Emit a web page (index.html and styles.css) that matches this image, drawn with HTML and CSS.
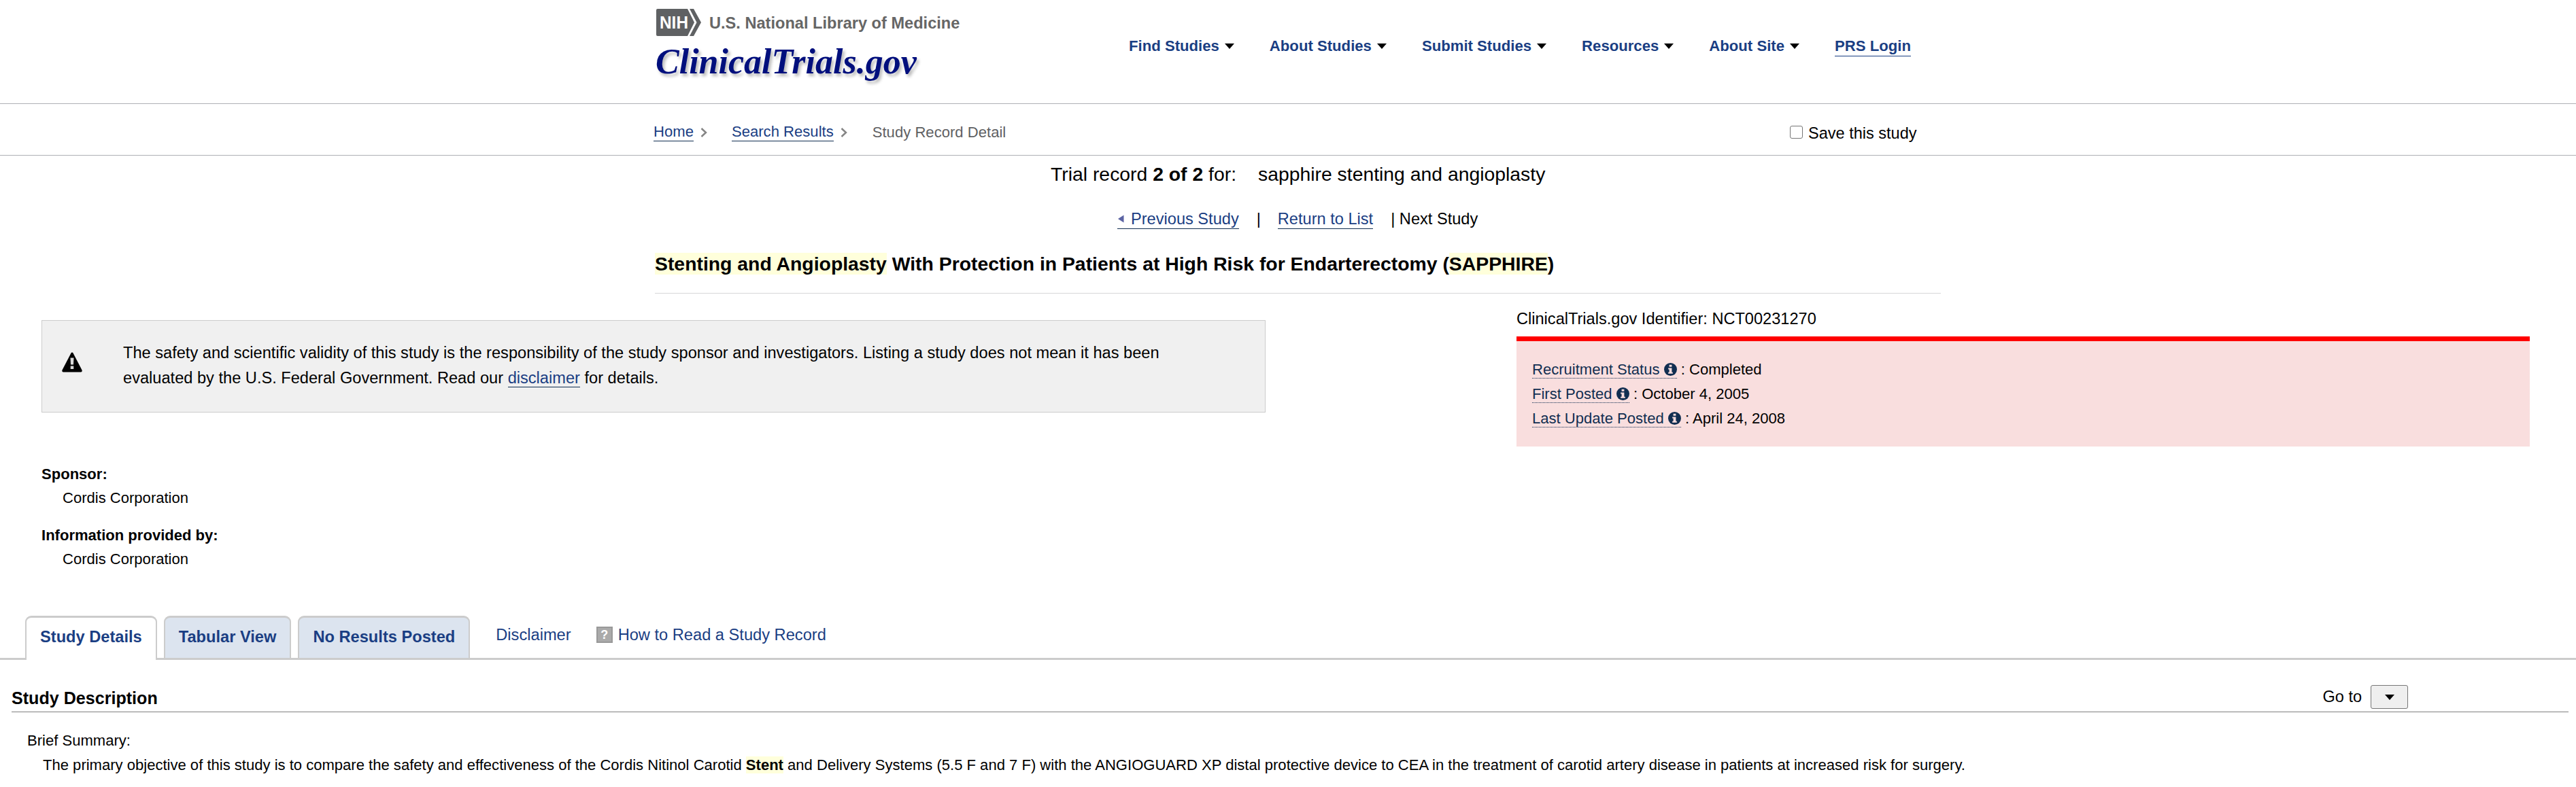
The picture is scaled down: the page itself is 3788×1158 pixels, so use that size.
FILE: index.html
```html
<!DOCTYPE html>
<html lang="en">
<head>
    <meta charset="UTF-8">
    <meta name="viewport" content="width=device-width, initial-scale=1.0">
    <title>Stenting and Angioplasty With Protection in Patients at High Risk for Endarterectomy (SAPPHIRE) - ClinicalTrials.gov</title>
    <link rel="stylesheet" href="styles.css">
</head>
<body>
    <header class="header">
        <div class="branding">
            <div class="nlm">
                <svg class="nih-logo" width="66" height="40" viewBox="0 0 66 40">
                    <path d="M2 0H46L56 20L46 40H2Q0 40 0 38V2Q0 0 2 0Z" fill="#5f6163"/>
                    <path d="M49 0H55L66 20L55 40H49L59.5 20Z" fill="#5f6163"/>
                    <text x="5" y="29" class="nih-text" textLength="42" lengthAdjust="spacingAndGlyphs">NIH</text>
                </svg>
                <span class="nlm-name">U.S. National Library of Medicine</span>
            </div>
            <div class="site-name">ClinicalTrials.gov</div>
        </div>
        <nav class="main-nav">
            <a href="#">Find Studies<span class="arrow"></span></a>
            <a href="#">About Studies<span class="arrow"></span></a>
            <a href="#">Submit Studies<span class="arrow"></span></a>
            <a href="#">Resources<span class="arrow"></span></a>
            <a href="#">About Site<span class="arrow"></span></a>
            <a href="#" class="login">PRS Login</a>
        </nav>
    </header>

    <div class="breadcrumb-bar">
        <div class="breadcrumbs">
            <a href="#" class="link">Home</a>
            <svg class="chevron" width="10" height="14" viewBox="0 0 10 14"><path d="M1.5 1L8 7L1.5 13" fill="none" stroke="#858585" stroke-width="2.5"/></svg>
            <a href="#" class="link">Search Results</a>
            <svg class="chevron" width="10" height="14" viewBox="0 0 10 14"><path d="M1.5 1L8 7L1.5 13" fill="none" stroke="#858585" stroke-width="2.5"/></svg>
            <span class="current">Study Record Detail</span>
        </div>
        <label class="save"><input type="checkbox">Save this study</label>
    </div>

    <div class="record-count">
        <span>Trial record <b>2 of 2</b> for:</span>
        <span>sapphire stenting and angioplasty</span>
    </div>
    <div class="record-nav">
        <a href="#" class="link prev"><svg width="11" height="12" viewBox="0 0 11 12"><path d="M1 6L9.5 0.5V11.5Z" fill="#5b63a3"/></svg>Previous Study</a>
        <span class="sep">|</span>
        <a href="#" class="link">Return to List</a>
        <span class="next">| Next Study</span>
    </div>

    <h1><mark>Stenting and Angioplasty</mark> With Protection in Patients at High Risk for Endarterectomy (<mark>SAPPHIRE</mark>)</h1>

    <div class="overview">
        <div class="left">
            <div class="notice">
                <svg class="warning" width="30" height="30" viewBox="0 0 30 30">
                    <path d="M13.5 1.5Q15 -0.5 16.5 1.5L29.5 26.5Q30.3 29.5 28 29.5H2Q-0.3 29.5 0.5 26.5Z" fill="#000"/>
                    <path d="M12.5 8.5H17.5L17 18.5H13ZM12.7 20.5H17.3V25H12.7Z" fill="#d8d8d8"/>
                </svg>
                <p>The safety and scientific validity of this study is the responsibility of the study sponsor and investigators. Listing a study does not mean it has been<br>evaluated by the U.S. Federal Government. Read our <a href="#" class="link">disclaimer</a> for details.</p>
            </div>
            <dl class="sponsor">
                <dt>Sponsor:</dt>
                <dd>Cordis Corporation</dd>
                <dt>Information provided by:</dt>
                <dd>Cordis Corporation</dd>
            </dl>
        </div>
        <div class="right">
            <div class="identifier">ClinicalTrials.gov Identifier: NCT00231270</div>
            <div class="status">
                <div><span class="term">Recruitment Status <svg class="info" viewBox="0 0 20 20"><circle cx="10" cy="10" r="10" fill="#112e51"/><path d="M8 3H12V6H8ZM6.5 8H12V14.5H13.5V16.5H6.5V14.5H8V10H6.5Z" fill="#f9dede"/></svg></span> : Completed</div>
                <div><span class="term">First Posted <svg class="info" viewBox="0 0 20 20"><circle cx="10" cy="10" r="10" fill="#112e51"/><path d="M8 3H12V6H8ZM6.5 8H12V14.5H13.5V16.5H6.5V14.5H8V10H6.5Z" fill="#f9dede"/></svg></span> : October 4, 2005</div>
                <div><span class="term">Last Update Posted <svg class="info" viewBox="0 0 20 20"><circle cx="10" cy="10" r="10" fill="#112e51"/><path d="M8 3H12V6H8ZM6.5 8H12V14.5H13.5V16.5H6.5V14.5H8V10H6.5Z" fill="#f9dede"/></svg></span> : April 24, 2008</div>
            </div>
        </div>
    </div>

    <div class="tabs">
        <a href="#" class="tab active">Study Details</a>
        <a href="#" class="tab">Tabular View</a>
        <a href="#" class="tab">No Results Posted</a>
        <a href="#" class="tab-link">Disclaimer</a>
        <a href="#" class="tab-link help"><span class="help-icon">?</span>How to Read a Study Record</a>
    </div>

    <section class="description">
        <div class="section-head">
            <h2>Study Description</h2>
            <div class="goto">Go to <button type="button"><span class="arrow"></span></button></div>
        </div>
        <div class="summary-label">Brief Summary:</div>
        <p class="summary">The primary objective of this study is to compare the safety and effectiveness of the Cordis Nitinol Carotid <mark>Stent</mark> and Delivery Systems (5.5 F and 7 F) with the ANGIOGUARD XP distal protective device to CEA in the treatment of carotid artery disease in patients at increased risk for surgery.</p>
    </section>
</body>
</html>
```
FILE: styles.css
```css
* {
    box-sizing: border-box;
}

body {
    margin: 0;
    font-family: Arial, "Liberation Sans", sans-serif;
    font-size: 22.05px;
    line-height: 36px;
    color: #000;
    background-color: #fff;
}

a {
    color: #1a3e83;
    text-decoration: none;
}

.link {
    border-bottom: 1px solid #112e51;
}

mark {
    background-color: #ffffdb;
    color: #000;
    font-weight: bold;
}

/* Header */
.header {
    display: flex;
    height: 153px;
    padding-left: 965px;
    border-bottom: 1px solid #aeb0b5;
}

.branding {
    width: 695px;
    padding-top: 13px;
}

.nlm {
    display: flex;
    align-items: center;
    gap: 12px;
    height: 40px;
}

.nih-text {
    font-family: Arial, "Liberation Sans", sans-serif;
    font-size: 25px;
    font-weight: bold;
    fill: #fff;
}

.nlm-name {
    padding-top: 1px;
    font-size: 23.6px;
    font-weight: bold;
    color: #666;
}

.site-name {
    margin: 8px 0 0 -1px;
    font-family: "Liberation Serif", "Times New Roman", serif;
    font-size: 52px;
    line-height: 60px;
    font-weight: bold;
    font-style: italic;
    color: #000f7d;
    text-shadow: 3px 4px 4px #bbb;
}

.main-nav {
    display: flex;
    align-items: flex-start;
    gap: 52px;
    padding-top: 53px;
}

.main-nav a {
    font-size: 22.15px;
    font-weight: bold;
    line-height: 29px;
    white-space: nowrap;
}

.main-nav .login {
    border-bottom: 1px solid #1a3e83;
}

.arrow {
    display: inline-block;
    margin-left: 8px;
    border-left: 7.5px solid transparent;
    border-right: 7.5px solid transparent;
    border-top: 8px solid #000;
    vertical-align: 3px;
}

/* Breadcrumbs */
.breadcrumb-bar {
    display: flex;
    align-items: flex-start;
    height: 76px;
    padding-left: 961px;
    border-bottom: 1px solid #aeb0b5;
}

.breadcrumbs {
    display: flex;
    align-items: center;
    width: 1671px;
    padding-top: 28px;
    font-size: 22.1px;
}

.breadcrumbs .link {
    line-height: 26px;
}

.chevron {
    margin: 0 36px 0 10px;
}

.current {
    margin-left: 1px;
    color: #5f6163;
    line-height: 27px;
}

.save {
    display: flex;
    align-items: center;
    padding-top: 25px;
    font-size: 23.52px;
}

.save input {
    appearance: none;
    width: 19px;
    height: 19px;
    margin: 0 8px 4px 0;
    border: 1.5px solid #767676;
    border-radius: 3px;
    background-color: #fff;
}

/* Record navigation */
.record-count {
    display: flex;
    gap: 32px;
    padding: 9px 0 0 1545px;
    font-size: 28.35px;
}

.record-nav {
    display: flex;
    align-items: flex-start;
    margin-top: 34px;
    padding-left: 1643px;
    font-size: 23.6px;
    line-height: 28px;
}

.prev svg {
    margin-right: 9px;
    vertical-align: 2px;
}

.sep {
    margin: 0 25px 0 26px;
}

.next {
    margin-left: 26px;
}

h1 {
    margin: 33px 934px 0 963px;
    height: 62px;
    border-bottom: 1px solid #d6d7d9;
    font-size: 28.37px;
    line-height: 36px;
}

/* Overview */
.overview {
    display: flex;
    justify-content: space-between;
    padding: 0 68px 0 61px;
}

.left {
    width: 1800px;
    padding-top: 39px;
}

.notice {
    display: flex;
    align-items: center;
    height: 136px;
    padding: 0 29px 2px;
    background-color: #f0f0f0;
    border: 1px solid #ccc;
}

.warning {
    margin-bottom: 11px;
}

.notice p {
    margin: 0 0 0 60px;
    font-size: 23.61px;
    line-height: 37px;
}

.sponsor {
    margin: 73px 0 0;
    line-height: 35px;
}

.sponsor dt {
    font-weight: bold;
}

.sponsor dd {
    margin: 0 0 20px 31px;
}

.right {
    width: 1490px;
    padding-top: 19px;
}

.identifier {
    height: 44px;
    font-size: 23.58px;
}

.status {
    height: 162px;
    padding: 24px 23px 0;
    border-top: 7px solid #f00;
    background-color: #f9dede;
}

.term {
    border-bottom: 1px dotted #112e51;
    color: #112e51;
}

.info {
    width: 19px;
    height: 19px;
    vertical-align: -2px;
}

/* Tabs */
.tabs {
    display: flex;
    align-items: flex-start;
    height: 65px;
    margin-top: 46px;
    padding-left: 37px;
    border-bottom: 3px solid #ccc;
    font-size: 23.65px;
}

.tab {
    height: 62px;
    margin-right: 10px;
    padding: 10px 20px 0;
    border: solid #ccc;
    border-width: 3px 2px 0;
    border-radius: 9px 9px 0 0;
    background-color: #dce4ef;
    font-weight: bold;
}

.tab.active {
    height: 65px;
    background-color: #fff;
}

.tab-link {
    margin: 10px 0 0 28px;
}

.help {
    display: flex;
    align-items: center;
    margin-left: 37px;
}

.help-icon {
    width: 24px;
    height: 24px;
    margin-right: 8px;
    border: 2px solid #999;
    background-color: #aaa;
    color: #fff;
    font-size: 18px;
    font-weight: bold;
    line-height: 20px;
    text-align: center;
}

/* Description */
.section-head {
    display: flex;
    justify-content: space-between;
    height: 77px;
    margin: 0 11px 0 17px;
    padding: 37px 236px 0 0;
    border-bottom: 1px solid #808080;
}

h2 {
    margin: 0;
    padding-top: 1px;
    font-size: 25.1px;
}

.goto {
    display: flex;
    align-items: flex-start;
    gap: 13px;
    font-size: 23.52px;
    line-height: 34px;
}

.goto button {
    display: flex;
    align-items: center;
    justify-content: center;
    width: 55px;
    height: 35px;
    padding: 0;
    border: 1px solid #767676;
    border-radius: 3px;
    background-color: #efefef;
}

.goto .arrow {
    margin: 0;
}

.summary-label {
    margin: 24px 0 0 40px;
}

.summary {
    margin: 0 0 0 63px;
    line-height: 35px;
}
```
